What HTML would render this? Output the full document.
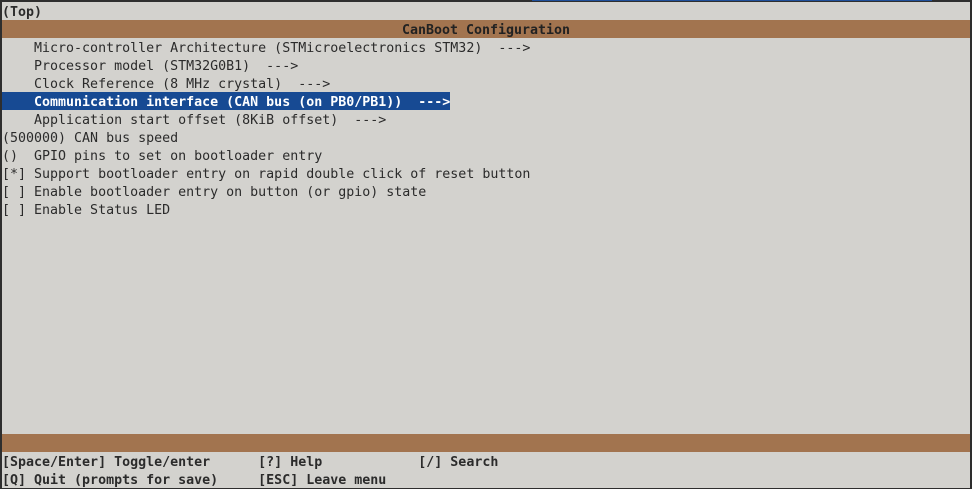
<!DOCTYPE html>
<html><head><style>
html,body{margin:0;padding:0;}
body{width:972px;height:489px;background:#2e2e2e;position:relative;overflow:hidden;font-family:"DejaVu Sans Mono","Liberation Mono",monospace;font-size:13.3px;color:#2b2b2b;}
#scr{position:absolute;left:2px;top:2px;width:968px;height:486px;background:#d3d2ce;}
.r{position:absolute;left:0;height:14px;padding-top:4px;line-height:14px;white-space:pre;width:968px;}
.bar{background:#a2744f;}
.b{font-weight:bold;}
.hl{background:#174a93;color:#fff;font-weight:bold;width:448px;}
#blue{position:absolute;top:0;left:532px;width:400px;height:1px;background:#1e4f9a;}
</style></head><body>
<div id="blue"></div>
<div id="scr">
<div class="r b" style="top:0">(Top)</div>
<div class="r bar b" style="top:18px;text-align:center;color:#222">CanBoot Configuration</div>
<div class="r" style="top:36px">    Micro-controller Architecture (STMicroelectronics STM32)  ---&gt;</div>
<div class="r" style="top:54px">    Processor model (STM32G0B1)  ---&gt;</div>
<div class="r" style="top:72px">    Clock Reference (8 MHz crystal)  ---&gt;</div>
<div class="r hl" style="top:90px">    Communication interface (CAN bus (on PB0/PB1))  ---&gt;</div>
<div class="r" style="top:108px">    Application start offset (8KiB offset)  ---&gt;</div>
<div class="r" style="top:126px">(500000) CAN bus speed</div>
<div class="r" style="top:144px">()  GPIO pins to set on bootloader entry</div>
<div class="r" style="top:162px">[*] Support bootloader entry on rapid double click of reset button</div>
<div class="r" style="top:180px">[ ] Enable bootloader entry on button (or gpio) state</div>
<div class="r" style="top:198px">[ ] Enable Status LED</div>
<div class="r bar" style="top:432px"></div>
<div class="r b" style="top:450px">[Space/Enter] Toggle/enter      [?] Help            [/] Search</div>
<div class="r b" style="top:468px">[Q] Quit (prompts for save)     [ESC] Leave menu</div>
</div>
</body></html>
